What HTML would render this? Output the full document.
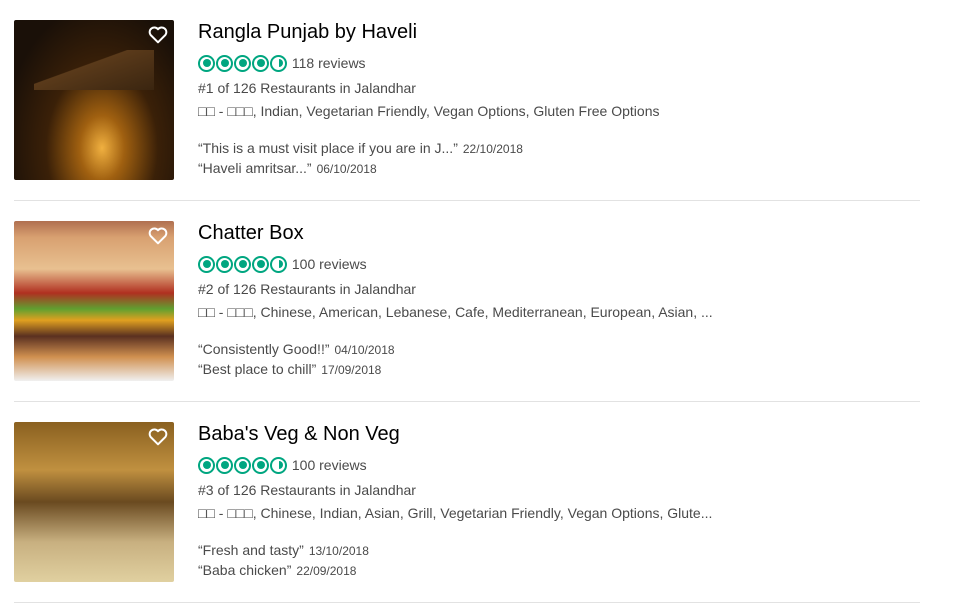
<!DOCTYPE html>
<html><head><meta charset="utf-8"><style>
body{margin:0;background:#fff;font-family:"Liberation Sans",Arial,sans-serif;color:#4a4a4a;}
.row{position:absolute;left:14px;width:906px;height:181px;border-bottom:1px solid #e2e2e2;box-sizing:border-box}
.img{position:absolute;left:0;top:0;width:160px;height:160px;border-radius:2px;overflow:hidden}
.heart{position:absolute;right:6px;top:6px}
.t{position:absolute;left:184px;top:0;font-size:20px;color:#000;line-height:24px}
.st{position:absolute;left:184px;top:34px;height:18px;display:flex;align-items:center;font-size:14px}
.c{width:17px;height:17px;border:2px solid #00a680;border-radius:50%;margin-right:1px;position:relative;box-sizing:border-box}
.c::after{content:"";position:absolute;left:2.5px;top:2.5px;width:8px;height:8px;border-radius:50%;background:#00a680}
.c.h::after{border-radius:0 4px 4px 0;left:6.5px;width:4px}
.l{position:absolute;left:184px;font-size:14px;line-height:16px}
.q{position:absolute;left:184px;font-size:14px;line-height:16px;color:#4a4a4a}
.q span{font-size:12px;margin-left:5px}
</style></head><body>

<div class="row" style="top:20px">
 <div class="img" style="background:radial-gradient(ellipse at 55% 80%,#f0b040 0,#a06010 18%,#3a2008 45%,#1a1008 80%)">
  <div style="position:absolute;left:20px;top:30px;width:120px;height:40px;background:linear-gradient(160deg,transparent 40%,#5a3a1a 41%,#3a2510 100%)"></div>
  <svg class="heart" width="20" height="18" viewBox="0 0 24 22"><path d="M12 20 L3 11 A5 5 0 0 1 12 4 A5 5 0 0 1 21 11 Z" fill="none" stroke="#fff" stroke-width="2.4" stroke-linejoin="round"/></svg>
 </div>
 <div class="t">Rangla Punjab by Haveli</div>
 <div class="st"><i class="c"></i><i class="c"></i><i class="c"></i><i class="c"></i><i class="c h"></i>&nbsp;118 reviews</div>
 <div class="l" style="top:60px">#1 of 126 Restaurants in Jalandhar</div>
 <div class="l" style="top:83px">□□ - □□□, Indian, Vegetarian Friendly, Vegan Options, Gluten Free Options</div>
 <div class="q" style="top:120px">“This is a must visit place if you are in J...”<span>22/10/2018</span></div>
 <div class="q" style="top:140px">“Haveli amritsar...”<span>06/10/2018</span></div>
</div>

<div class="row" style="top:221px">
 <div class="img" style="background:linear-gradient(180deg,#b07050 0,#d8a070 10%,#e8c090 30%,#b03020 45%,#60a030 55%,#e0a020 62%,#5a3020 72%,#d09050 85%,#f0f0f0 100%)">
  <svg class="heart" width="20" height="18" viewBox="0 0 24 22"><path d="M12 20 L3 11 A5 5 0 0 1 12 4 A5 5 0 0 1 21 11 Z" fill="none" stroke="#fff" stroke-width="2.4" stroke-linejoin="round"/></svg>
 </div>
 <div class="t">Chatter Box</div>
 <div class="st"><i class="c"></i><i class="c"></i><i class="c"></i><i class="c"></i><i class="c h"></i>&nbsp;100 reviews</div>
 <div class="l" style="top:60px">#2 of 126 Restaurants in Jalandhar</div>
 <div class="l" style="top:83px">□□ - □□□, Chinese, American, Lebanese, Cafe, Mediterranean, European, Asian, ...</div>
 <div class="q" style="top:120px">“Consistently Good!!”<span>04/10/2018</span></div>
 <div class="q" style="top:140px">“Best place to chill”<span>17/09/2018</span></div>
</div>

<div class="row" style="top:422px">
 <div class="img" style="background:linear-gradient(180deg,#8a6020 0,#c09040 30%,#6a4a20 50%,#c8b080 75%,#e0d0a0 100%)">
  <svg class="heart" width="20" height="18" viewBox="0 0 24 22"><path d="M12 20 L3 11 A5 5 0 0 1 12 4 A5 5 0 0 1 21 11 Z" fill="none" stroke="#fff" stroke-width="2.4" stroke-linejoin="round"/></svg>
 </div>
 <div class="t">Baba's Veg &amp; Non Veg</div>
 <div class="st"><i class="c"></i><i class="c"></i><i class="c"></i><i class="c"></i><i class="c h"></i>&nbsp;100 reviews</div>
 <div class="l" style="top:60px">#3 of 126 Restaurants in Jalandhar</div>
 <div class="l" style="top:83px">□□ - □□□, Chinese, Indian, Asian, Grill, Vegetarian Friendly, Vegan Options, Glute...</div>
 <div class="q" style="top:120px">“Fresh and tasty”<span>13/10/2018</span></div>
 <div class="q" style="top:140px">“Baba chicken”<span>22/09/2018</span></div>
</div>
</body></html>
